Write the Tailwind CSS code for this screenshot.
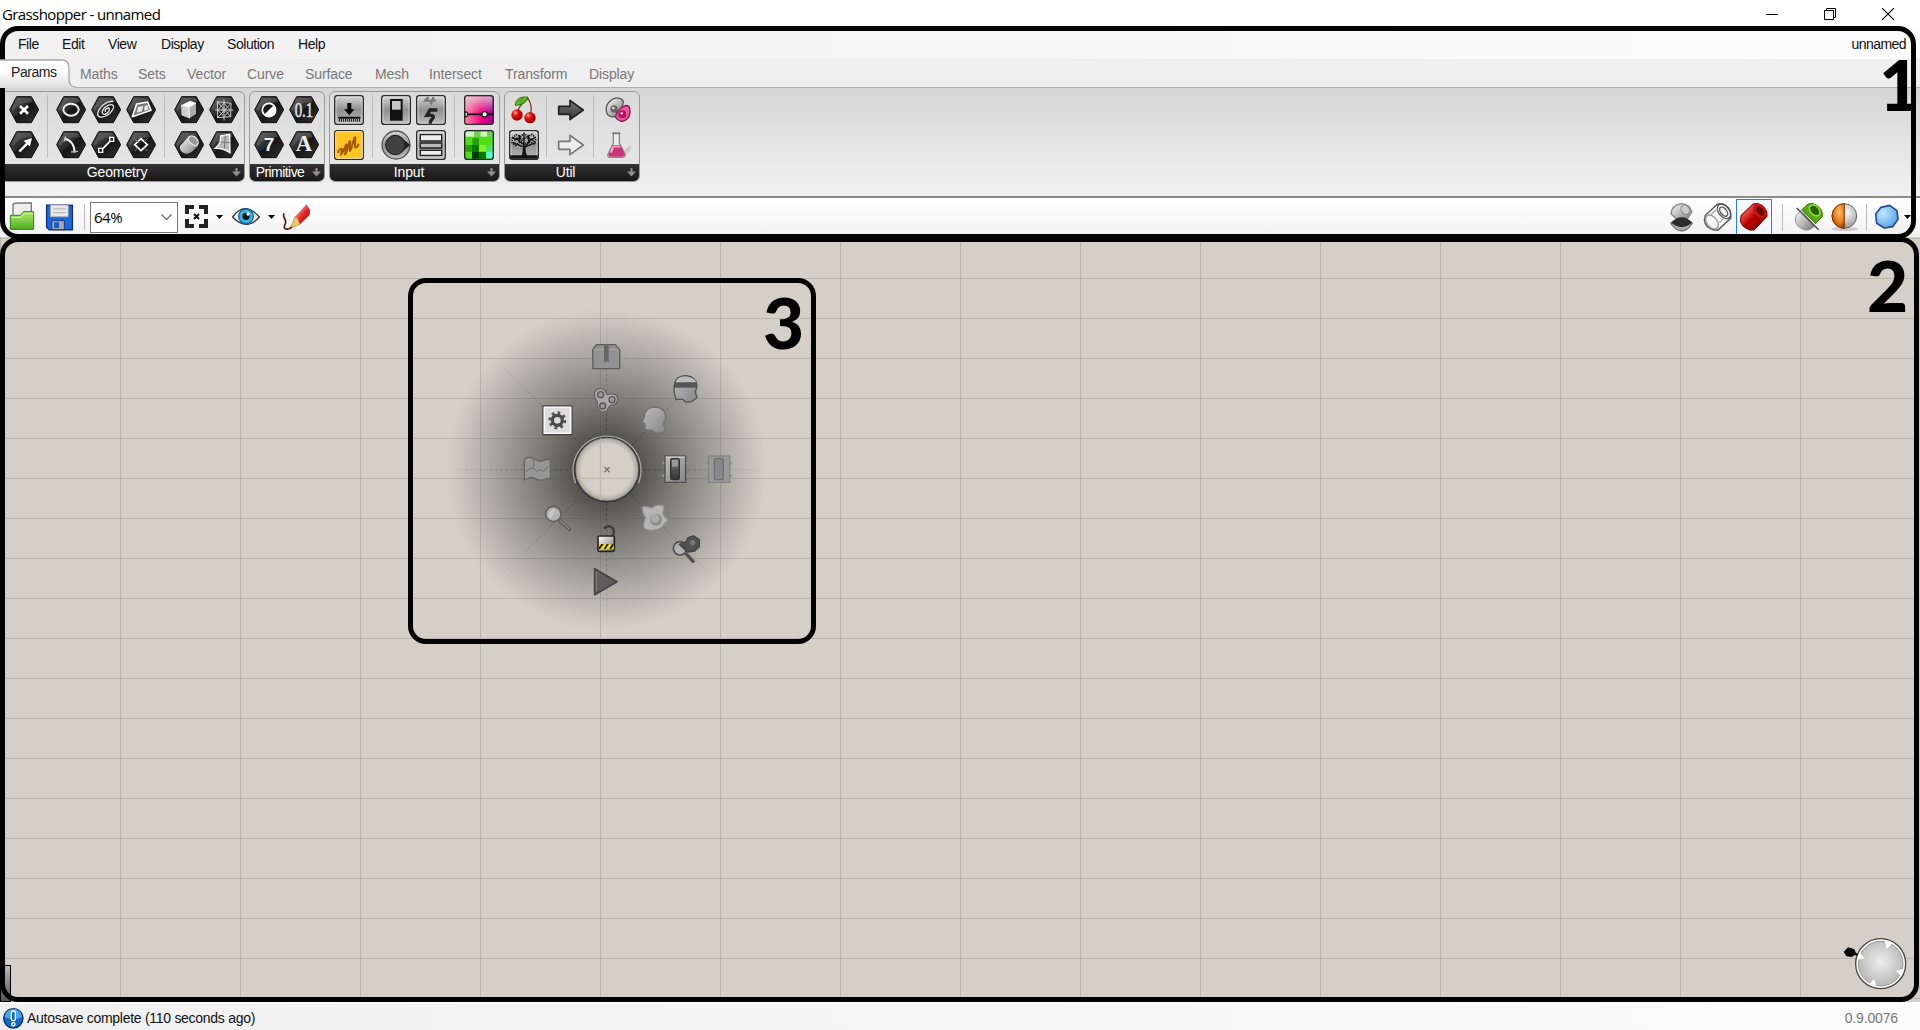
<!DOCTYPE html>
<html lang="en">
<head>
<meta charset="utf-8">
<title>Grasshopper - unnamed</title>
<script src="https://cdn.jsdelivr.net/npm/@tailwindcss/browser@4"></script>
</head>
<body class="relative flex h-[1030px] w-[1920px] flex-col overflow-hidden bg-white font-['Liberation_Sans',Arial,sans-serif] text-[14px] text-black">

<!-- shared gradients and shapes -->
<svg class="absolute size-0" aria-hidden="true">
  <defs>
    <linearGradient id="hexg" x1="0" y1="0" x2="1" y2="1"><stop offset="0" stop-color="#555"/><stop offset=".45" stop-color="#2a2a2a"/><stop offset=".5" stop-color="#151515"/><stop offset="1" stop-color="#333"/></linearGradient>
    <linearGradient id="silver" x1="0" y1="0" x2="1" y2="1"><stop offset="0" stop-color="#fff"/><stop offset="1" stop-color="#777"/></linearGradient>
    <linearGradient id="tile" x1="0" y1="0" x2="0" y2="1"><stop offset="0" stop-color="#d8d8d8"/><stop offset=".5" stop-color="#8f8f8f"/><stop offset="1" stop-color="#bdbdbd"/></linearGradient>
    <linearGradient id="mid" x1="0" y1="0" x2="1" y2="1"><stop offset="0" stop-color="#bdbdbd"/><stop offset="1" stop-color="#858585"/></linearGradient>
    <linearGradient id="dark" x1="0" y1="0" x2="0" y2="1"><stop offset="0" stop-color="#777"/><stop offset="1" stop-color="#333"/></linearGradient>
    <linearGradient id="pink" x1="0" y1="0" x2="1" y2="0"><stop offset="0" stop-color="#ff88a8"/><stop offset=".6" stop-color="#f2007c"/><stop offset="1" stop-color="#a0009a"/></linearGradient>
    <linearGradient id="fade" x1="0" y1="0" x2="0" y2="1"><stop offset="0" stop-color="#ddd" stop-opacity=".8"/><stop offset=".6" stop-color="#ddd" stop-opacity="0"/></linearGradient>
    <linearGradient id="green" x1="0" y1="0" x2="0" y2="1"><stop offset="0" stop-color="#b5e86a"/><stop offset="1" stop-color="#4fae22"/></linearGradient>
    <linearGradient id="red" x1="0" y1="0" x2="1" y2="1"><stop offset="0" stop-color="#b80000"/><stop offset=".3" stop-color="#e5453f"/><stop offset=".5" stop-color="#b80000"/><stop offset="1" stop-color="#700"/></linearGradient>
    <linearGradient id="pencil" x1="0" y1="0" x2="1" y2="1"><stop offset=".2" stop-color="#f79a9a"/><stop offset=".55" stop-color="#e52525"/><stop offset="1" stop-color="#a80808"/></linearGradient>
    <radialGradient id="cherry" cx=".35" cy=".3" r=".7"><stop offset="0" stop-color="#ff9a90"/><stop offset=".4" stop-color="#e01010"/><stop offset="1" stop-color="#900"/></radialGradient>
    <radialGradient id="blueball" cx=".35" cy=".35" r=".8"><stop offset="0" stop-color="#c0e8ff"/><stop offset="1" stop-color="#4a9ae8"/></radialGradient>
    <radialGradient id="orangeball" cx=".6" cy=".35" r=".8"><stop offset="0" stop-color="#ffc070"/><stop offset=".5" stop-color="#e8801c"/><stop offset="1" stop-color="#7a2c00"/></radialGradient>
    <radialGradient id="grayball" cx=".55" cy=".35" r=".65"><stop offset="0" stop-color="#fff"/><stop offset="1" stop-color="#999"/></radialGradient>
    <radialGradient id="halo"><stop offset="0" stop-color="#3a3a38" stop-opacity=".95"/><stop offset=".22" stop-color="#3a3a38" stop-opacity=".82"/><stop offset=".4" stop-color="#40403e" stop-opacity=".62"/><stop offset=".6" stop-color="#454543" stop-opacity=".42"/><stop offset=".8" stop-color="#45443f" stop-opacity=".2"/><stop offset=".93" stop-color="#45443f" stop-opacity=".06"/><stop offset="1" stop-color="#45443f" stop-opacity="0"/></radialGradient>
    <radialGradient id="spokes" gradientUnits="userSpaceOnUse" cx="620" cy="600" r="470"><stop offset=".2" stop-color="#222" stop-opacity=".5"/><stop offset=".6" stop-color="#333" stop-opacity=".25"/><stop offset="1" stop-color="#333" stop-opacity=".05"/></radialGradient>
    <radialGradient id="hole"><stop offset=".78" stop-color="#d4d0c8"/><stop offset=".92" stop-color="#b2afa8"/><stop offset="1" stop-color="#55534f"/></radialGradient>
    <symbol id="hex" viewBox="0 0 90 90"><path d="M2 44 23 5H67L89 44 67 83H23Z" fill="url(#hexg)" stroke="#0a0a0a" stroke-width="3" stroke-linejoin="round"/><path d="M7 42 26 9H64L72 22Q30 20 12 48Z" fill="#fff" opacity=".13"/></symbol>
    <symbol id="box" viewBox="0 0 90 90"><rect x="2" y="2" width="86" height="86" rx="8" fill="url(#tile)" stroke="#2b2b2b" stroke-width="4"/><rect x="6" y="6" width="78" height="78" rx="5" fill="none" stroke="#eee" stroke-opacity=".6" stroke-width="3"/></symbol>
    <symbol id="more" viewBox="0 0 9 9"><path d="M3.500 0H5.500V3.500H9L4.500 8.500 0 3.500H3.500Z" fill="#8f8f8f"/></symbol>
  </defs>
</svg>

<!-- title bar -->
<header class="flex h-[29px] shrink-0 items-center justify-between bg-white pl-[2px] pr-[26px]">
  <span class="font-['Open_Sans',sans-serif] text-[15px] leading-none tracking-[-0.6px]">Grasshopper - unnamed</span>
  <div class="flex items-center gap-[46px] pb-px">
    <svg class="h-3 w-3" viewBox="0 0 12 12"><path d="M0 6.500H12" stroke="#000"/></svg>
    <svg class="h-3 w-3" viewBox="0 0 12 12" fill="none" stroke="#000"><path d="M.5 2.500H9.500V11.500H.5ZM2.500 2V.5H11.500V9.500H10"/></svg>
    <svg class="h-3 w-3" viewBox="0 0 12 12" stroke="#000" stroke-width="1.100"><path d="M0 0 12 12M12 0 0 12"/></svg>
  </div>
</header>

<!-- menu -->
<nav class="flex h-[30px] shrink-0 items-center justify-between bg-linear-to-r from-[#f0f0f0] to-[#fcfcfc] pl-[18px] pr-[14px] text-[14px] tracking-[-0.45px] text-[#111]">
  <div class="flex">
    <span class="w-[44px]">File</span><span class="w-[46px]">Edit</span><span class="w-[53px]">View</span><span class="w-[66px]">Display</span><span class="w-[71px]">Solution</span><span>Help</span>
  </div>
  <span class="tracking-[-0.55px]">unnamed</span>
</nav>

<!-- tabs -->
<div class="flex h-[29px] shrink-0 bg-[#efefef]">
  <div class="relative z-10 flex h-[29px] w-[76px]">
    <svg class="h-[29px] w-[76px]" viewBox="0 0 76 29"><defs><linearGradient id="tabg" x1="0" y1="0" x2="0" y2="1"><stop offset="0" stop-color="#fff"/><stop offset=".4" stop-color="#fff"/><stop offset="1" stop-color="#dcdcdc"/></linearGradient></defs><path d="M0 1H62Q69 1 69 9V20Q69 28 76 28V29H0Z" fill="url(#tabg)"/><path d="M0 1H62Q69 1 69 9V20Q69 28 76 28" fill="none" stroke="#a8a8a8" stroke-width="1.300"/></svg>
    <span class="absolute left-[11px] top-[4px] leading-[18px] tracking-[-0.45px] text-[#222]">Params</span>
  </div>
  <div class="flex flex-1 border-b border-[#b0b0b0] pl-[4px] pt-[6px] leading-[18px] tracking-[-0.1px] text-[#777]">
    <span class="w-[58px]">Maths</span><span class="w-[49px]">Sets</span><span class="w-[60px]">Vector</span><span class="w-[58px]">Curve</span><span class="w-[70px]">Surface</span><span class="w-[54px]">Mesh</span><span class="w-[76px]">Intersect</span><span class="w-[84px]">Transform</span><span>Display</span>
  </div>
</div>

<!-- ribbon -->
<section class="flex h-[110px] shrink-0 items-start gap-[4px] border-b-2 border-[#8a8a8a] bg-linear-to-b from-[#d6d6d6] to-[#f1f1f1] pt-[3px]">
  <div class="flex h-[91px] w-[245px] flex-col overflow-hidden rounded-md border border-[#999] bg-linear-to-b from-[#dadada] to-[#e8e8e8]">
    <div class="flex h-[72px] items-start pl-[8px] pt-[3px]">
      <div class="grid gap-[5px]">
        <svg class="size-[30px]" viewBox="0 0 90 90"><use href="#hex"/><path d="M33 33 57 56M57 33 33 56" stroke="#fff" stroke-width="8"/></svg>
        <svg class="size-[30px]" viewBox="0 0 90 90"><use href="#hex"/><path d="M28 62 51 39 44 32 69 24 63 49 56 44 34 67Z" fill="#fff"/></svg>
      </div>
      <div class="ml-[8px] mr-[8px] h-[62px] w-px bg-[#bbb]"></div>
      <div class="grid grid-cols-3 gap-[5px]">
        <svg class="size-[30px]" viewBox="0 0 90 90"><use href="#hex"/><ellipse cx="45" cy="44" rx="23" ry="18" fill="none" stroke="#eee" stroke-width="6"/></svg>
        <svg class="size-[30px]" viewBox="0 0 90 90"><use href="#hex"/><g fill="none" stroke="#e5e5e5" stroke-width="4"><path d="M67 19C48 16 22 36 20 57C19 72 47 68 61 50C75 32 65 25 50 32C36 38 28 55 39 58C50 58 61 40 52 39C44 40 39 49 45 50"/></g></svg>
        <svg class="size-[30px]" viewBox="0 0 90 90"><use href="#hex"/><path d="M32 27 65 21 75 46 19 65Z" fill="#777" stroke="#fff" stroke-width="5" stroke-linejoin="round"/><path d="M36 36 52 33 48 49 32 53ZM56 32 64 31 68 43 54 47Z" fill="#e8e8e8"/></svg>
        <svg class="size-[30px]" viewBox="0 0 90 90"><use href="#hex"/><path d="M24 26Q54 30 56 68" fill="none" stroke="#eee" stroke-width="6"/><path d="M29 19 24 35M45 66 66 64" stroke="#bbb" stroke-width="4"/></svg>
        <svg class="size-[30px]" viewBox="0 0 90 90"><use href="#hex"/><path d="M30 61 62 29" stroke="#fff" stroke-width="5"/><path d="M23 55H35V67H23ZM56 22H68V34H56Z" fill="#222" stroke="#fff" stroke-width="4"/></svg>
        <svg class="size-[30px]" viewBox="0 0 90 90"><use href="#hex"/><path d="M45 26 64 44 45 62 26 44Z" fill="none" stroke="#fff" stroke-width="5"/><path d="M26 26 37 37M64 26 53 37M26 63 37 52M64 63 53 52" stroke="#888" stroke-width="3"/></svg>
      </div>
      <div class="ml-[8px] mr-[9px] h-[62px] w-px bg-[#bbb]"></div>
      <div class="grid grid-cols-2 gap-[5px]">
        <svg class="size-[30px]" viewBox="0 0 90 90"><use href="#hex"/><path d="M22 31 48 18 66 24 66 57 46 70 23 61Z" fill="#aaa"/><path d="M22 31 48 18 66 24 45 37Z" fill="#fff"/><path d="M22 31 45 37 46 70 23 61Z" fill="#ccc"/><path d="M22 31 45 37 46 70M45 37 66 24" fill="none" stroke="#f5f5f5" stroke-width="3"/></svg>
        <svg class="size-[30px]" viewBox="0 0 90 90"><use href="#hex"/><g fill="none" stroke="#ccc" stroke-width="3"><path d="M25 20 66 25 65 65 26 68ZM45 14V76M18 45H73M25 20 65 65M66 25 26 68M45 25 64 45 45 65 26 45Z"/></g><path d="M45 35 55 45 45 55 35 45Z" fill="#bbb" opacity=".6"/></svg>
        <svg class="size-[30px]" viewBox="0 0 90 90"><use href="#hex"/><path d="M19 47 43 20Q64 10 74 32L72 47 53 66Q37 76 24 66Q15 57 19 47Z" fill="url(#silver)"/><ellipse cx="58" cy="32" rx="17" ry="11" transform="rotate(42 58 32)" fill="#999" stroke="#f5f5f5" stroke-width="3"/></svg>
        <svg class="size-[30px]" viewBox="0 0 90 90"><use href="#hex"/><path d="M35 18 62 13 63 68Q42 54 19 55 36 42 35 18Z" fill="#bbb" stroke="#fff" stroke-width="4"/><path d="M49 16 46 56M34 36 62 38" stroke="#777" stroke-width="3"/></svg>
      </div>
    </div>
    <div class="relative h-[17px] bg-linear-to-b from-[#333] to-[#181818] pr-[11px] text-center leading-[17px] tracking-[-0.1px] text-white">Geometry<svg class="absolute right-[3px] top-[4px] size-[9px]"><use href="#more"/></svg></div>
  </div>

  <div class="flex h-[91px] w-[76px] flex-col overflow-hidden rounded-md border border-[#999] bg-linear-to-b from-[#dadada] to-[#e8e8e8]">
    <div class="grid h-[72px] grid-cols-[30px_30px] content-start gap-[5px] pl-[4px] pt-[3px]">
      <svg class="size-[30px]" viewBox="0 0 90 90"><use href="#hex"/><circle cx="45" cy="45" r="20" fill="#181818" stroke="#fff" stroke-width="5"/><path d="M30 59A20 20 0 0 0 60 30Z" fill="#fff"/></svg>
      <svg class="size-[30px]" viewBox="0 0 90 90"><use href="#hex"/><text x="45" y="65" text-anchor="middle" font-family="Liberation Serif" font-size="62" fill="#ddd" stroke="#ddd" stroke-width="2" textLength="56" lengthAdjust="spacingAndGlyphs">0.1</text></svg>
      <svg class="size-[30px]" viewBox="0 0 90 90"><use href="#hex"/><text x="45" y="64" text-anchor="middle" font-family="Liberation Sans" font-size="57" font-weight="bold" fill="#eee">7</text></svg>
      <svg class="size-[30px]" viewBox="0 0 90 90"><use href="#hex"/><text x="45" y="64" text-anchor="middle" font-family="Liberation Serif" font-size="68" font-weight="bold" fill="#eee">A</text></svg>
    </div>
    <div class="relative h-[17px] bg-linear-to-b from-[#333] to-[#181818] pr-[14px] text-center leading-[17px] tracking-[-0.55px] text-white">Primitive<svg class="absolute right-[3px] top-[4px] size-[9px]"><use href="#more"/></svg></div>
  </div>

  <div class="flex h-[91px] w-[171px] flex-col overflow-hidden rounded-md border border-[#999] bg-linear-to-b from-[#dadada] to-[#e8e8e8]">
    <div class="flex h-[72px] items-start pl-[4px] pt-[3px]">
      <div class="grid gap-[5px]">
        <svg class="size-[30px]" viewBox="0 0 90 90"><use href="#box"/><path d="M40 24H52V43H61L46 61 30 43H40Z" fill="#000"/><path d="M13 68H79" stroke="#111" stroke-width="6"/><path d="M15 76H79" stroke="#222" stroke-width="8" stroke-dasharray="3 3"/></svg>
        <svg class="size-[30px]" viewBox="0 0 90 90"><use href="#box"/><rect x="5" y="5" width="80" height="80" rx="4" fill="#ffc524" stroke="#fff2a0" stroke-width="2"/><path d="M12 69C14 56 26 52 24 60L21 74C30 65 34 42 38 44L33 73C42 65 44 30 49 33L47 63C56 57 58 18 64 22L63 52C70 55 72 45 75 42" fill="none" stroke="#a65a00" stroke-width="6" stroke-linejoin="round"/></svg>
      </div>
      <div class="ml-[8px] mr-[8px] h-[62px] w-px bg-[#bbb]"></div>
      <div class="grid grid-cols-2 gap-[5px]">
        <svg class="size-[30px]" viewBox="0 0 90 90"><use href="#box"/><rect x="27" y="12" width="38" height="65" fill="#111"/><rect x="33" y="18" width="26" height="26" fill="#c4c4c4"/></svg>
        <svg class="size-[30px]" viewBox="0 0 90 90"><use href="#box"/><path d="M37 6 28 17H60M53 6 44 28" fill="none" stroke="#777" stroke-width="7"/><path d="M64 45H42L33 61Q60 58 49 72 42 78 43 86" fill="none" stroke="#222" stroke-width="10"/></svg>
        <svg class="size-[30px]" viewBox="0 0 90 90"><circle cx="45" cy="45" r="42" fill="url(#tile)" stroke="#555" stroke-width="4"/><circle cx="43" cy="45" r="29" fill="#444" stroke="#111" stroke-width="3"/><path d="M62 24 88 45 62 66Z" fill="#222"/><circle cx="43" cy="45" r="27" fill="#404040"/></svg>
        <svg class="size-[30px]" viewBox="0 0 90 90"><use href="#box"/><g fill="#eee" stroke="#222" stroke-width="4"><path d="M13 14H77V33H13Z"/><path d="M13 39H77V54H13Z" fill="#bbb"/><path d="M13 61H77V76H13Z"/></g></svg>
      </div>
      <div class="ml-[8px] mr-[9px] h-[62px] w-px bg-[#bbb]"></div>
      <div class="grid gap-[5px]">
        <svg class="size-[30px]" viewBox="0 0 90 90"><rect x="2" y="2" width="86" height="86" rx="8" fill="url(#pink)"/><rect x="4" y="4" width="82" height="82" rx="6" fill="url(#fade)"/><rect x="2" y="2" width="86" height="86" rx="8" fill="none" stroke="#2b2b2b" stroke-width="4"/><path d="M4 58H88" stroke="#111" stroke-width="5"/><g fill="#fff" stroke="#222" stroke-width="4"><path d="M3 50A8 8 0 0 1 3 66Z"/><circle cx="62" cy="58" r="8"/></g></svg>
        <svg class="size-[30px]" viewBox="0 0 90 90"><rect x="2" y="2" width="86" height="86" rx="8" fill="#4dde13"/><path d="M4 4H30V20H4ZM49 4H70V20H49Z" fill="#d5f5c0"/><path d="M30 4H49V20H30ZM70 4H86V20H70Z" fill="#73cf55"/><path d="M4 45H25V65H4ZM25 24H45V45H25Z" fill="#2a9f0d"/><path d="M45 45H67V66H45Z" fill="#82f51c"/><path d="M24 45H45V66H24ZM46 65H66V86H46Z" fill="#0b7800"/><path d="M24 66H46V86H24Z" fill="#003e00"/><path d="M67 45H87V65H67Z" fill="#48df75"/><path d="M67 65H87V86H67Z" fill="#50ffcc"/><rect x="2" y="2" width="86" height="86" rx="8" fill="none" stroke="#222" stroke-width="4"/></svg>
      </div>
    </div>
    <div class="relative h-[17px] bg-linear-to-b from-[#333] to-[#181818] pr-[11px] text-center leading-[17px] tracking-[-0.1px] text-white">Input<svg class="absolute right-[3px] top-[4px] size-[9px]"><use href="#more"/></svg></div>
  </div>

  <div class="flex h-[91px] w-[136px] flex-col overflow-hidden rounded-md border border-[#999] bg-linear-to-b from-[#dadada] to-[#e8e8e8]">
    <div class="flex h-[72px] items-start pl-[4px] pt-[3px]">
      <div class="grid gap-[5px]">
        <svg class="size-[30px]" viewBox="0 0 90 90"><path d="M57 10Q34 26 25 50M57 10Q72 34 64 58" fill="none" stroke="#7a4030" stroke-width="4"/><path d="M18 31Q22 3 57 6 52 31 18 31Z" fill="#55ad18" stroke="#287a0a" stroke-width="3"/><path d="M22 28Q38 20 51 8" stroke="#a7e060" stroke-width="2"/><circle cx="24" cy="60" r="17" fill="url(#cherry)"/><circle cx="63" cy="68" r="17" fill="url(#cherry)"/></svg>
        <svg class="size-[30px]" viewBox="0 0 90 90"><use href="#box"/><g stroke="#111" fill="none"><path d="M4 81H86" stroke-width="10"/><path d="M45 80V45L20 24M45 55 68 26M45 48V12M50 50 80 38M41 50 12 38M32 36V15M59 38V15M25 29 10 23M66 30 80 21" stroke-width="4"/><path d="M38 80Q43 68 43 48H48Q48 68 54 80Z" fill="#111" stroke-width="2"/><path d="M10 24 22 14 35 20 45 10 57 19 69 13 81 26 76 41 60 36 50 42 35 34 20 46 9 38Z" stroke-width="5" stroke-dasharray="4 3"/><path d="M16 31 28 23 40 29 51 22 65 28 75 33" stroke-width="6" stroke-dasharray="3 2"/></g></svg>
      </div>
      <div class="ml-[7px] mr-[9px] h-[62px] w-px bg-[#bbb]"></div>
      <div class="grid gap-[5px]">
        <svg class="size-[30px]" viewBox="0 0 90 90"><path d="M8 34H42V16L82 45 42 74V58H8Z" fill="url(#dark)" stroke="#222" stroke-width="5" stroke-linejoin="round"/></svg>
        <svg class="size-[30px]" viewBox="0 0 90 90"><path d="M8 34H42V16L82 45 42 74V58H8Z" fill="#eee" stroke="#777" stroke-width="5" stroke-linejoin="round"/></svg>
      </div>
      <div class="ml-[7px] mr-[9px] h-[62px] w-px bg-[#bbb]"></div>
      <div class="grid gap-[5px]">
        <svg class="size-[30px]" viewBox="0 0 90 90"><path d="M10 48C6 25 31 3 50 10 71 16 57 34 48 53 40 72 13 69 10 48Z" fill="url(#silver)" stroke="#555" stroke-width="4"/><circle cx="33" cy="42" r="11" fill="#666"/><circle cx="31" cy="39" r="4" fill="#ddd"/><path d="M39 59C46 39 77 20 80 40 86 65 67 82 53 78 42 74 35 69 39 59Z" fill="#e55b9c" stroke="#8e1650" stroke-width="4"/><circle cx="58" cy="58" r="12" fill="#b01058"/><circle cx="56" cy="55" r="4" fill="#ffc0dc"/></svg>
        <svg class="size-[30px]" viewBox="0 0 90 90"><path d="M69 73Q90 60 82 44L58 66Z" fill="#ccc"/><path d="M31 10H49V39L66 73Q68 82 58 82H22Q12 82 15 73L31 39Z" fill="#eee" stroke="#888" stroke-width="4"/><path d="M28 46H53L65 73Q66 80 57 80H23Q14 80 17 73Z" fill="#c93478"/><path d="M31 48 24 68" stroke="#ffabd0" stroke-width="6"/><path d="M28 50H53" stroke="#f08cb8" stroke-width="6"/><path d="M28 10H52" stroke="#777" stroke-width="5"/></svg>
      </div>
    </div>
    <div class="relative h-[17px] bg-linear-to-b from-[#333] to-[#181818] pr-[13px] text-center leading-[17px] tracking-[-0.2px] text-white">Util<svg class="absolute right-[3px] top-[4px] size-[9px]"><use href="#more"/></svg></div>
  </div>
</section>

<!-- canvas toolbar -->
<section class="flex h-[39px] shrink-0 items-start justify-between bg-linear-to-b from-white to-[#f1f1f1] pl-[8px] pr-[9px] pt-[1px]">
  <div class="flex h-[36px] items-center">
    <svg class="h-[30px] w-[28px]" viewBox="0 0 84 90"><path d="M15 45V6L25 3H70V42L54 51Z" fill="#eee" stroke="#777" stroke-width="4"/><path d="M7 40H37L46 29H77V82H7Z" fill="url(#green)" stroke="#2e8217" stroke-width="3"/><path d="M10 46H39L48 34H75" fill="none" stroke="#cdf49e" stroke-width="3"/></svg>
    <svg class="ml-[9px] h-[29px] w-[29px]" viewBox="0 0 93 90"><path d="M5 5H88V85H14L5 76Z" fill="#1c68df" stroke="#0a2e80" stroke-width="4"/><path d="M17 5H75V43H17Z" fill="#e8e8e8" stroke="#888" stroke-width="2"/><path d="M26 17H67M26 29H67" stroke="#bbb" stroke-width="4"/><path d="M22 55H62V84H22Z" fill="#aaa" stroke="#153a80" stroke-width="3"/><path d="M29 60H45V79H29Z" fill="#1c5bc9"/></svg>
    <div class="ml-[10px] h-[26px] w-px bg-[#bbb]"></div>
    <div class="ml-[5px] flex h-[31px] w-[88px] items-center justify-between border border-[#777] bg-white pl-[3px] pr-[5px] font-['Open_Sans',sans-serif] text-[15px] tracking-[-0.5px]">64%<svg class="h-[7px] w-[11px]" viewBox="0 0 11 7"><path d="M.5 .5 5.500 5.500 10.500 .5" fill="none" stroke="#666" stroke-width="1.200"/></svg></div>
    <svg class="ml-[7px] h-[24px] w-[24px]" viewBox="0 0 24 24"><path d="M2 9V2H9M14 2H21V9M21 14V21H14M9 21H2V14" fill="none" stroke="#222" stroke-width="4"/><path d="M9 9 14 14M14 9 9 14" stroke="#111" stroke-width="2"/></svg>
    <svg class="ml-[7px] h-[4px] w-[7px]" viewBox="0 0 7 4"><path d="M0 0H7L3.500 4Z"/></svg>
    <svg class="ml-[9px] h-[24px] w-[28px]" viewBox="0 0 84 72"><path d="M2 36Q38-14 82 36 44 80 2 36Z" fill="#eef8ff" stroke="#333" stroke-width="4"/><circle cx="42" cy="34" r="22" fill="#38b4e7" stroke="#155f9c" stroke-width="4"/><circle cx="42" cy="34" r="11" fill="#07131d"/><circle cx="48" cy="27" r="5" fill="#fff"/></svg>
    <svg class="ml-[8px] h-[4px] w-[7px]" viewBox="0 0 7 4"><path d="M0 0H7L3.500 4Z"/></svg>
    <svg class="ml-[7px] h-[28px] w-[29px]" viewBox="0 0 87 84"><path d="M38 42 74 4 84 22 83 36 54 64Z" fill="url(#pencil)"/><path d="M38 42 46 45 54 64 22 77 32 60Z" fill="#f3c86d" stroke="#b78028" stroke-width="2"/><path d="M7 31C-3 41 18 50 9 64 0 84 22 80 30 72" fill="none" stroke="#541a18" stroke-width="5"/></svg>
  </div>
  <div class="flex h-[36px] items-center">
    <svg class="h-[30px] w-[26px]" viewBox="0 0 78 90"><path d="M6 36Q8 10 36 5 64 7 68 30L54 53 24 52Z" fill="url(#silver)" stroke="#888" stroke-width="4"/><ellipse cx="49" cy="23" rx="12" ry="15" transform="rotate(-40 49 23)" fill="#ccc" stroke="#888" stroke-width="3"/><path d="M5 63Q38 35 71 63 56 87 38 87 17 86 5 63Z" fill="#aaa" stroke="#555" stroke-width="3"/><path d="M7 62Q38 30 69 62 38 88 7 62Z" fill="#2c2c2c"/></svg>
    <svg class="ml-[8px] size-[30px]" viewBox="0 0 90 90" fill="none" stroke="#555" stroke-width="4"><path d="M4 54 7 40 44 6 58 6Q88 17 83 49L45 84H32Q6 76 4 54Z" fill="#f5f5f5"/><ellipse cx="63" cy="28" rx="16" ry="25" transform="rotate(-38 63 28)"/><ellipse cx="62" cy="29" rx="9" ry="16" transform="rotate(-38 62 29)"/><ellipse cx="27" cy="60" rx="15" ry="24" transform="rotate(-38 27 60)" stroke="#999"/><path d="M22 39 44 20M48 62 64 48" stroke="#aaa"/></svg>
    <div class="ml-[3px] flex h-[36px] w-[36px] items-center justify-center border border-[#2583d9] bg-[#f1f7fd]">
      <svg class="size-[30px]" viewBox="0 0 90 90"><path d="M4 54 7 39 42 6 56 4Q88 17 84 43L46 84H32Q5 74 4 54Z" fill="url(#red)" stroke="#780000" stroke-width="3"/><ellipse cx="62" cy="26" rx="17" ry="24" transform="rotate(-42 62 26)" fill="#c61710"/><ellipse cx="64" cy="27" rx="10" ry="16" transform="rotate(-42 64 27)" fill="#6d0000"/></svg>
    </div>
    <div class="ml-[10px] h-[27px] w-px bg-[#bbb]"></div>
    <svg class="ml-[11px] size-[30px]" viewBox="0 0 90 90"><path d="M4 54 7 39 24 24 61 74 45 84H32Q5 74 4 54Z" fill="url(#silver)" stroke="#999" stroke-width="3"/><path d="M24 23 42 6 56 4Q88 17 85 43L65 65Z" fill="#58a811" stroke="#347400" stroke-width="3"/><ellipse cx="62" cy="25" rx="13" ry="19" transform="rotate(-42 62 25)" fill="#276100" stroke="#8ade31" stroke-width="5"/><path d="M8 18 74 83" stroke="#444" stroke-width="4"/></svg>
    <svg class="ml-[6px] size-[30px]" viewBox="0 0 90 90"><ellipse cx="45" cy="81" rx="40" ry="6" fill="#ccc"/><circle cx="43" cy="42" r="37" fill="url(#grayball)" stroke="#666" stroke-width="3"/><path d="M43 5A37 37 0 0 0 43 79Z" fill="url(#orangeball)" stroke="#883500" stroke-width="3"/></svg>
    <div class="ml-[6px] h-[27px] w-px bg-[#bbb]"></div>
    <svg class="ml-[6px] h-[30px] w-[28px]" viewBox="0 0 84 90"><path d="M24 16 50 10 72 26 75 52 59 74 34 78 11 64 8 36Z" fill="url(#blueball)" stroke="#264a91" stroke-width="5" stroke-linejoin="round"/></svg>
    <svg class="ml-[3px] h-[4px] w-[7px]" viewBox="0 0 7 4"><path d="M0 0H7L3.500 4Z"/></svg>
  </div>
</section>

<!-- canvas -->
<main class="relative h-[765px] shrink-0 overflow-hidden bg-[#d4d0c8]">
  <svg class="absolute inset-0 h-[765px] w-[1920px]" viewBox="0 237 1920 765">
    <defs><pattern id="grid" width="120" height="40" patternUnits="userSpaceOnUse" x="0" y="238"><path d="M0 0H120V1H1V40H0Z" fill="#b9b6ae"/></pattern></defs>
    <rect x="0" y="237" width="1920" height="765" fill="url(#grid)"/>
  </svg>

  <!-- radial menu -->
  <svg class="absolute left-[400px] top-[33px] h-[380px] w-[420px]" viewBox="0 0 1260 1140">
    <circle cx="620" cy="598" r="482" fill="url(#halo)"/>
    <path d="M620 130V490M620 700V1060M150 600H510M730 600H1090M300 280 545 525M695 525 940 280M300 920 545 675M695 675 940 920" stroke="url(#spokes)" stroke-width="3" stroke-dasharray="9 6" fill="none"/>
    <circle cx="621" cy="598" r="98" fill="url(#hole)"/>
    <path d="M601 503V692M525 625H716" stroke="#b9b6ae" stroke-width="3"/>
    <circle cx="621" cy="598" r="97" fill="none" stroke="#333" stroke-width="4"/>
    <path d="M527 640A102 102 0 1 1 715 640" fill="none" stroke="#a5a5a5" stroke-width="4"/>
    <path d="M613 591 629 607M629 591 613 607" stroke="#777" stroke-width="4"/>
    <!-- package -->
    <path d="M578 240 590 224H646L659 240V296H579Z" fill="#929292" stroke="#5d5d5d" stroke-width="4" stroke-linejoin="round"/><path d="M581 239H656" stroke="#aaa" stroke-width="3"/><path d="M612 226H626V278L619 272 612 278Z" fill="#666"/>
    <!-- links -->
    <path d="M583 372Q585 355 602 356 616 356 621 374L637 371Q654 374 653 390 650 405 631 406L625 414Q621 427 607 426 590 421 592 395 583 386 583 372Z" fill="#aaa" stroke="#656565" stroke-width="4"/><g fill="#999" stroke="#555" stroke-width="4"><circle cx="602" cy="374" r="9"/><circle cx="636" cy="389" r="9"/><circle cx="608" cy="408" r="9"/></g>
    <!-- goggles head -->
    <path d="M823 346Q827 316 859 317 889 320 891 349L886 366 891 382Q876 399 857 396L848 388 828 388 822 366Z" fill="url(#mid)" stroke="#505050" stroke-width="4"/><path d="M827 336Q832 319 858 320 884 322 888 336Z" fill="#bbb"/><path d="M823 337H891V353H823Z" fill="#555"/>
    <!-- head -->
    <path d="M733 440Q735 411 767 411 799 415 797 444L790 465 798 480Q786 492 764 488L758 481 735 479 735 462 727 457Z" fill="url(#mid)" stroke="#747474" stroke-width="4"/>
    <!-- gear -->
    <rect x="429" y="408" width="87" height="86" fill="#dedede" stroke="#444" stroke-width="4"/><rect x="433" y="412" width="79" height="78" fill="none" stroke="#fafafa" stroke-width="4"/><circle cx="472" cy="451" r="22" fill="none" stroke="#555" stroke-width="10" stroke-dasharray="8 9.280"/><circle cx="472" cy="451" r="15" fill="none" stroke="#4a4a4a" stroke-width="10"/>
    <!-- map -->
    <path d="M373 568Q385 558 398 564 418 577 429 572 440 567 451 569V627Q440 622 430 630 415 633 398 622 384 622 373 630Z" fill="#969696" stroke="#666" stroke-width="4" stroke-linejoin="round"/><path d="M376 606Q392 590 404 597L412 605Q420 594 430 605L446 588M398 568Q404 578 400 592" stroke="#6c6c6c" stroke-width="3" fill="none"/>
    <!-- components -->
    <g><path d="M787 579H863M787 617H863" stroke="#999" stroke-width="7"/><rect x="795" y="558" width="62" height="79" fill="url(#mid)" stroke="#505050" stroke-width="4"/><path d="M797 561H855" stroke="#ddd" stroke-width="3"/><rect x="812" y="566" width="26" height="63" rx="5" fill="url(#dark)" stroke="#333" stroke-width="4"/><rect x="816" y="570" width="18" height="20" fill="#999"/></g>
    <g><path d="M920 579H996M920 617H996" stroke="#8d8d8b" stroke-width="7"/><rect x="926" y="558" width="63" height="79" fill="#999" stroke="#858583" stroke-width="4"/><rect x="943" y="566" width="27" height="63" rx="5" fill="#888" stroke="#707070" stroke-width="4"/></g>
    <!-- magnifier -->
    <path d="M477 750 511 781" stroke="#5a5a5a" stroke-width="10"/><path d="M480 752 508 777" stroke="#8a8a8a" stroke-width="4"/><circle cx="460" cy="732" r="23" fill="#b2b2b2" stroke="#626262" stroke-width="5"/><path d="M444 738Q448 718 466 717L453 746Z" fill="#c9c9c9"/>
    <!-- blob -->
    <path d="M727 717Q724 708 738 710L757 713Q766 702 790 706 794 716 789 728 791 740 803 748 805 756 794 760 786 782 754 781 724 781 732 759L736 742Q726 730 727 717Z" fill="#b5b5b5" stroke="#8d8d8d" stroke-width="4"/><circle cx="768" cy="749" r="18" fill="#8c8c8c"/><circle cx="765" cy="745" r="13" fill="#aaa"/>
    <!-- pinned magnifier -->
    <path d="M857 850 882 877" stroke="#505050" stroke-width="10"/><circle cx="840" cy="835" r="20" fill="#b2b2b2" stroke="#505050" stroke-width="5"/><path d="M838 823 859 815 864 803 880 797 898 809 898 830 884 843 862 846Z" fill="#515151" stroke="#444" stroke-width="4"/><circle cx="878" cy="818" r="8" fill="#777"/>
    <!-- lock -->
    <path d="M612 776Q625 762 638 774 645 784 638 798" fill="none" stroke="#3d3d3d" stroke-width="7"/><rect x="594" y="798" width="49" height="46" rx="4" fill="url(#silver)" stroke="#252525" stroke-width="5"/><path d="M597 822H641V837H597Z" fill="#efe000"/><path d="M597 832 604 822H611L600 837H597ZM611 837 620 822H627L617 837ZM627 837 636 822H641V826L634 837Z" fill="#1a1a1a"/>
    <!-- play -->
    <path d="M584 896 651 935 584 974Z" fill="#5e5e5e" stroke="#444" stroke-width="5" stroke-linejoin="round"/><path d="M589 905V965" stroke="#888" stroke-width="3"/>
  </svg>

  <!-- compass -->
  <svg class="absolute left-[1840px] top-[698px] h-[60px] w-[72px]" viewBox="0 0 216 180"><defs><radialGradient id="comp" cx=".5" cy=".45" r=".5"><stop offset="0" stop-color="#eee"/><stop offset="1" stop-color="#bcbcbc"/></radialGradient></defs><circle cx="122" cy="86" r="75" fill="#fff" stroke="#444" stroke-width="4"/><circle cx="122" cy="86" r="67" fill="url(#comp)" stroke="#777" stroke-width="2"/><g fill="#fff"><path d="M134 17 158 24 140 42Z"/><path d="M189 103 183 124 168 107Z"/><path d="M109 153 88 146 103 132Z"/><path d="M54 74 60 54 75 70Z"/></g><path d="M11 50 24 37 43 43 48 54 55 57 50 62 44 60 36 66 19 64Z" fill="#080808"/></svg>
  <div class="absolute left-0 top-[728px] h-[37px] w-[11px] border border-black bg-linear-to-b from-[#bbb] to-[#555]"></div>
</main>

<!-- status bar -->
<footer class="flex flex-1 items-center justify-between border-t-2 border-white bg-linear-to-r from-[#f0f0f0] to-[#fcfcfc] pl-[3px] pr-[22px] pt-[2px]">
  <div class="flex items-center gap-[3px]">
    <svg class="size-[21px]" viewBox="0 0 63 63"><circle cx="31" cy="31" r="29" fill="#1266c4" stroke="#092b70" stroke-width="4"/><path d="M5 28A26 26 0 0 1 57 28Q32 39 5 28Z" fill="#46a6e8"/><rect x="25" y="9" width="12" height="29" rx="6" fill="#1266c4" stroke="#fff" stroke-width="4"/><circle cx="31" cy="49" r="5" fill="#1266c4" stroke="#fff" stroke-width="4"/></svg>
    <span class="tracking-[-0.28px] text-[#111]">Autosave complete (110 seconds ago)</span>
  </div>
  <span class="tracking-[-0.15px] text-[#777]">0.9.0076</span>
</footer>

<!-- numbered region callouts -->
<div class="absolute left-0 top-[26px] h-[213px] w-[1916px] rounded-[18px] border-5 border-black"></div>
<div class="absolute left-0 top-[237px] h-[765px] w-[1919px] rounded-[18px] border-5 border-black"></div>
<div class="absolute left-[408px] top-[278px] h-[366px] w-[408px] rounded-[18px] border-5 border-black"></div>
<span class="absolute left-[1879px] top-[48px] font-['Lato',sans-serif] text-[71px] font-black leading-[71px]">1</span>
<span class="absolute left-[1867px] top-[249px] font-['Lato',sans-serif] text-[71px] font-black leading-[71px]">2</span>
<span class="absolute left-[763px] top-[286px] font-['Lato',sans-serif] text-[71px] font-black leading-[71px]">3</span>
</body>
</html>
